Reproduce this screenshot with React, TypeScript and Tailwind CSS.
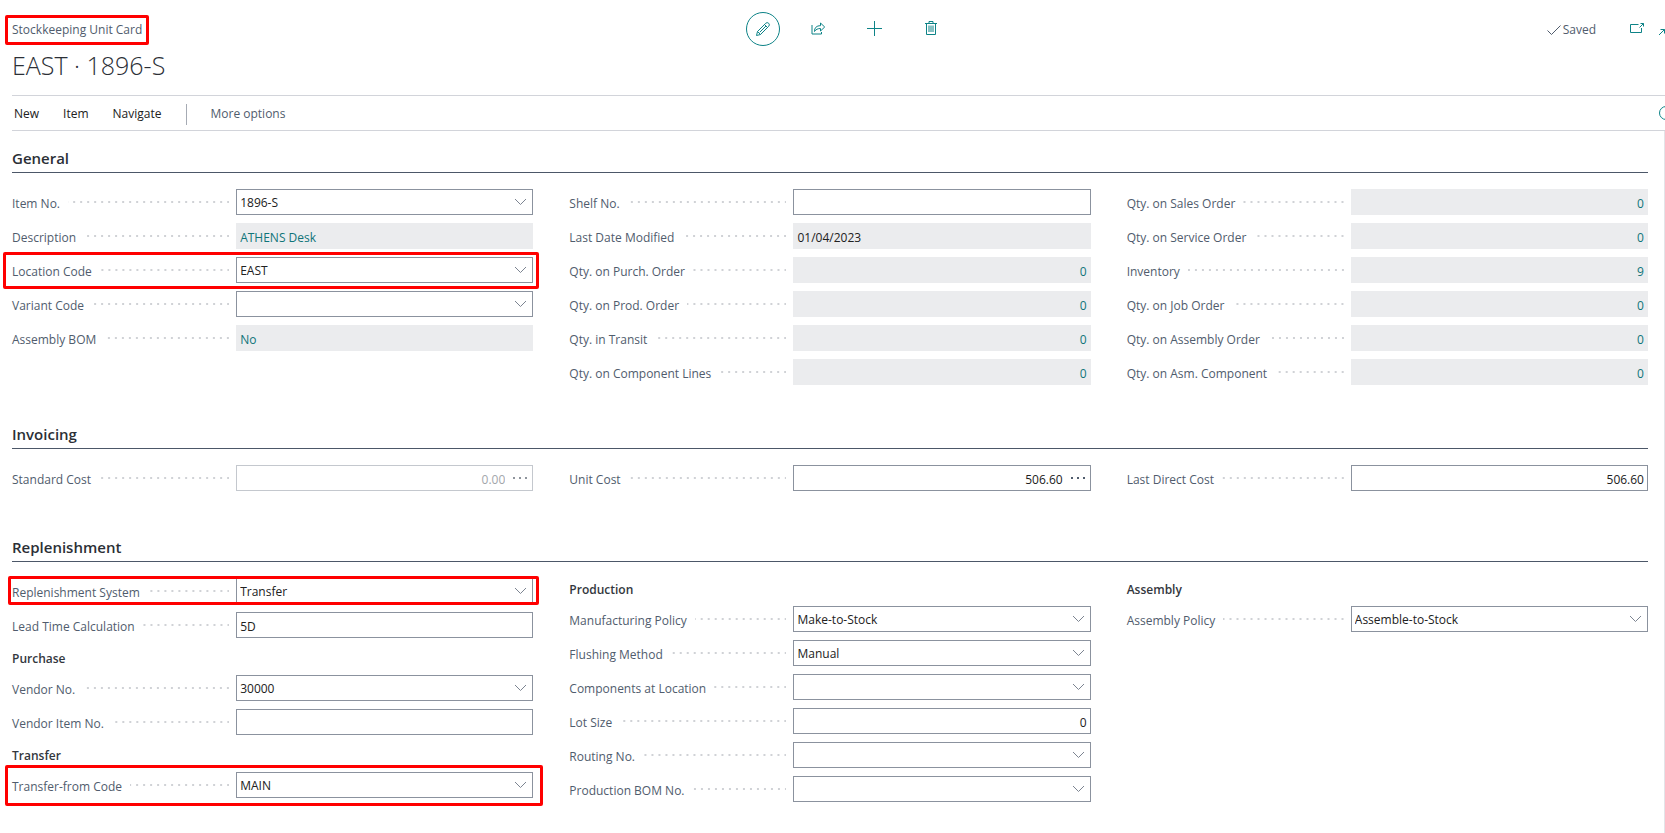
import type { ReactNode } from "react";
import clsx from "clsx";

type FieldKind = "text" | "select" | "readonly" | "assist";

type FieldItem = {
  label: string;
  value?: string;
  kind?: FieldKind;
  align?: "left" | "right";
  link?: boolean;
  disabled?: boolean;
  // classes of the red frame drawn round the row
  mark?: string;
};

type GroupItem = { heading: string };

type Item = FieldItem | GroupItem;

const general: Item[][] = [
  [
    { label: "Item No.", value: "1896-S", kind: "select" },
    { label: "Description", value: "ATHENS Desk", kind: "readonly", link: true },
    {
      label: "Location Code",
      value: "EAST",
      kind: "select",
      mark: "-top-[5px] -bottom-[6px] -left-[9px] -right-[6px]",
    },
    { label: "Variant Code", kind: "select" },
    { label: "Assembly BOM", value: "No", kind: "readonly", link: true },
  ],
  [
    { label: "Shelf No." },
    { label: "Last Date Modified", value: "01/04/2023", kind: "readonly" },
    { label: "Qty. on Purch. Order", value: "0", kind: "readonly", align: "right", link: true },
    { label: "Qty. on Prod. Order", value: "0", kind: "readonly", align: "right", link: true },
    { label: "Qty. in Transit", value: "0", kind: "readonly", align: "right", link: true },
    { label: "Qty. on Component Lines", value: "0", kind: "readonly", align: "right", link: true },
  ],
  [
    { label: "Qty. on Sales Order", value: "0", kind: "readonly", align: "right", link: true },
    { label: "Qty. on Service Order", value: "0", kind: "readonly", align: "right", link: true },
    { label: "Inventory", value: "9", kind: "readonly", align: "right", link: true },
    { label: "Qty. on Job Order", value: "0", kind: "readonly", align: "right", link: true },
    { label: "Qty. on Assembly Order", value: "0", kind: "readonly", align: "right", link: true },
    { label: "Qty. on Asm. Component", value: "0", kind: "readonly", align: "right", link: true },
  ],
];

const invoicing: Item[][] = [
  [{ label: "Standard Cost", value: "0.00", kind: "assist", align: "right", disabled: true }],
  [{ label: "Unit Cost", value: "506.60", kind: "assist", align: "right" }],
  [{ label: "Last Direct Cost", value: "506.60", align: "right" }],
];

const replenishment: Item[][] = [
  [
    {
      label: "Replenishment System",
      value: "Transfer",
      kind: "select",
      mark: "-top-[2px] -bottom-[1px] -left-[4px] -right-[6px]",
    },
    { label: "Lead Time Calculation", value: "5D" },
    { heading: "Purchase" },
    { label: "Vendor No.", value: "30000", kind: "select" },
    { label: "Vendor Item No." },
    { heading: "Transfer" },
    {
      label: "Transfer-from Code",
      value: "MAIN",
      kind: "select",
      mark: "-top-[7px] -bottom-[8px] -left-[7px] -right-[10px]",
    },
  ],
  [
    { heading: "Production" },
    { label: "Manufacturing Policy", value: "Make-to-Stock", kind: "select" },
    { label: "Flushing Method", value: "Manual", kind: "select" },
    { label: "Components at Location", kind: "select" },
    { label: "Lot Size", value: "0", align: "right" },
    { label: "Routing No.", kind: "select" },
    { label: "Production BOM No.", kind: "select" },
  ],
  [
    { heading: "Assembly" },
    { label: "Assembly Policy", value: "Assemble-to-Stock", kind: "select" },
  ],
];

function Mark({ className }: { className: string }) {
  return (
    <span
      className={clsx(
        "pointer-events-none absolute z-10 rounded-[2px] border-3 border-[#ff0000]",
        className
      )}
    />
  );
}

function Field({ item }: { item: FieldItem }) {
  const { label, value = "", kind = "text", align, link, disabled, mark } = item;
  const id = label.toLowerCase().replace(/[^a-z]+/g, "-");

  return (
    <div className="relative flex h-[26px] items-center">
      <div className="flex w-[43%] items-center gap-2 pr-[7px]">
        <label htmlFor={id} className="pt-1 whitespace-nowrap text-[#505c6d]">
          {label}
        </label>
        <span className="h-[2px] flex-1 bg-[linear-gradient(to_right,transparent_5px,#d0d2d6_5px)] bg-[length:7px_2px] bg-right bg-repeat-x" />
      </div>
      <div
        className={clsx(
          "relative flex h-full flex-1 items-center border",
          kind === "readonly" ? "border-[#ebecee] bg-[#ebecee]" : "bg-white",
          kind !== "readonly" && (disabled ? "border-[#c4c8ce]" : "border-[#8b929e]")
        )}
      >
        {kind === "select" ? (
          <>
            <select
              id={id}
              defaultValue={value}
              className="h-full w-full appearance-none pt-[2px] pr-7 pl-[3px] text-[#212121] outline-none"
            >
              <option>{value}</option>
            </select>
            <svg
              className="pointer-events-none absolute right-[5px]"
              width="13"
              height="8"
              viewBox="0 0 13 8"
              fill="none"
              stroke="#7c8491"
            >
              <path d="M1 1l5.500 5.500L12 1" />
            </svg>
          </>
        ) : (
          <input
            id={id}
            type="text"
            defaultValue={value}
            readOnly={kind === "readonly"}
            disabled={disabled}
            className={clsx(
              "h-full w-full min-w-0 px-[3px] pt-[2px] outline-none",
              align === "right" && "text-right",
              link ? "text-[#0f7479]" : disabled ? "text-[#a3a6ab]" : "text-[#212121]"
            )}
          />
        )}
        {kind === "assist" && (
          <button
            type="button"
            aria-label={`Edit ${label}`}
            disabled={disabled}
            className="flex h-full w-6 shrink-0 items-center justify-center"
          >
            <svg width="14" height="2" viewBox="0 0 14 2" fill={disabled ? "#8f959d" : "#505c6d"}>
              <rect x="0" width="2" height="2" />
              <rect x="6" width="2" height="2" />
              <rect x="12" width="2" height="2" />
            </svg>
          </button>
        )}
      </div>
      {mark && <Mark className={mark} />}
    </div>
  );
}

function Section({ title, columns, className }: { title: string; columns: Item[][]; className?: string }) {
  return (
    <section className={className}>
      <h2 className="border-b border-[#4c5768] pb-1 text-[15px] leading-5 font-semibold text-[#2b2f36]">
        {title}
      </h2>
      <div className="grid grid-cols-3 gap-9 pt-4">
        {columns.map((items, i) => (
          <div key={i} className="flex flex-col gap-2">
            {items.map((item) =>
              "heading" in item ? (
                <h3
                  key={item.heading}
                  className="h-5 leading-6 font-semibold text-[#33373d] not-first:mt-px"
                >
                  {item.heading}
                </h3>
              ) : (
                <Field key={item.label} item={item} />
              )
            )}
          </div>
        ))}
      </div>
    </section>
  );
}

function IconButton({ label, className, children }: { label: string; className?: string; children: ReactNode }) {
  return (
    <button
      type="button"
      aria-label={label}
      className={clsx("flex items-center justify-center text-[#0d8387]", className)}
    >
      {children}
    </button>
  );
}

export default function App() {
  return (
    <div className="flex min-h-screen flex-col overflow-x-hidden bg-white font-['Open_Sans',sans-serif] text-[12px] leading-4">
      {/* Header */}
      <header className="pt-3 pl-3">
        <div className="-mr-2 grid h-[34px] grid-cols-[1fr_auto_1fr] items-center">
          <div className="flex">
            <span className="relative pt-px text-[#505c6d]">
              Stockkeeping Unit Card
              <Mark className="-top-[6px] -bottom-[7px] -left-[7px] -right-[7px]" />
            </span>
          </div>
          <div className="ml-2 flex items-center gap-[22px]">
            <IconButton label="Edit" className="size-[34px] rounded-full border border-[#0d8387]">
              <svg width="16" height="16" viewBox="0 0 16 16" fill="none" stroke="currentColor">
                <path d="M1.500 14.500l1-4 8.200-8.200a1.800 1.800 0 0 1 3 3L5.500 13.500zM9.500 3.500l3 3M2.500 10.500l3 3M4.800 11.200L11 5" />
              </svg>
            </IconButton>
            <IconButton label="Share" className="size-[34px] pb-[2px]">
              <svg width="15" height="13" viewBox="0 0 15 13" fill="none" stroke="currentColor">
                <path d="M1 3v9h9.500v-2" />
                <path d="M3.500 9.500c0-3.800 2-5.800 6-5.800V1l4.200 4-4.200 4V6.500c-2.700 0-4.500.8-6 3z" />
              </svg>
            </IconButton>
            <IconButton label="New record" className="size-[34px] pb-[2px]">
              <svg width="15" height="15" viewBox="0 0 15 15" fill="none" stroke="currentColor">
                <path d="M7.500 0v15M0 7.500h15" />
              </svg>
            </IconButton>
            <IconButton label="Delete" className="size-[34px] pb-[2px]">
              <svg width="12" height="14" viewBox="0 0 12 14" fill="none" stroke="currentColor">
                <path d="M0 2.500h12M4 2.500v-2h4v2M1.500 2.500v11h9v-11" />
                <path d="M4 4.500V11M6 4.500V11M8 4.500V11" />
              </svg>
            </IconButton>
          </div>
          <div className="flex items-center justify-end">
            <span className="flex items-center gap-[2px] pt-px text-[#505c6d]">
              <svg width="14" height="10" viewBox="0 0 14 10" fill="none" stroke="currentColor">
                <path d="M.5 5.500l4 4L13.500.5" />
              </svg>
              Saved
            </span>
            <IconButton label="Open in new window" className="ml-[34px] pb-[2px]">
              <svg width="14" height="10" viewBox="0 0 14 10" fill="none" stroke="currentColor">
                <path d="M8.500 1.500h-8v8h11V5M9.500 4.500l4-4M10.500.5h3v3" />
              </svg>
            </IconButton>
            <IconButton label="Collapse" className="ml-[15px]">
              <svg width="14" height="14" viewBox="0 0 14 14" fill="none" stroke="currentColor">
                <path d="M0 13l5.500-5.500M1.500 7.500h4v4M14 1L8.500 6.500M8.500 2.500v4h4" />
              </svg>
            </IconButton>
          </div>
        </div>
        <h1 className="text-[25px] leading-[38px] font-light text-[#2b2f36]">EAST · 1896-S</h1>
        {/* Action bar */}
        <nav className="mt-[11px] flex h-9 items-center justify-between border-y border-[#d2d4da]">
          <div className="flex items-center gap-6 pt-[2px] pl-[2px] text-[#212121]">
            <button type="button">New</button>
            <button type="button">Item</button>
            <button type="button">Navigate</button>
            <span className="h-[21px] w-px bg-[#a6abb4]" />
            <button type="button" className="text-[#505c6d]">
              More options
            </button>
          </div>
          <IconButton label="Details" className="-mr-2">
            <svg width="14" height="14" viewBox="0 0 14 14" fill="none" stroke="currentColor">
              <circle cx="7" cy="7" r="6.500" />
              <path d="M7 6v4.500M7 3.500v1" />
            </svg>
          </IconButton>
        </nav>
      </header>

      {/* Card body */}
      <main className="flex-1 border-r border-[#e3e4e8] pt-[17px] pr-4 pb-6 pl-3">
        <Section title="General" columns={general} />
        <Section title="Invoicing" columns={invoicing} className="mt-[39px]" />
        <Section title="Replenishment" columns={replenishment} className="mt-[46px]" />
      </main>
    </div>
  );
}
